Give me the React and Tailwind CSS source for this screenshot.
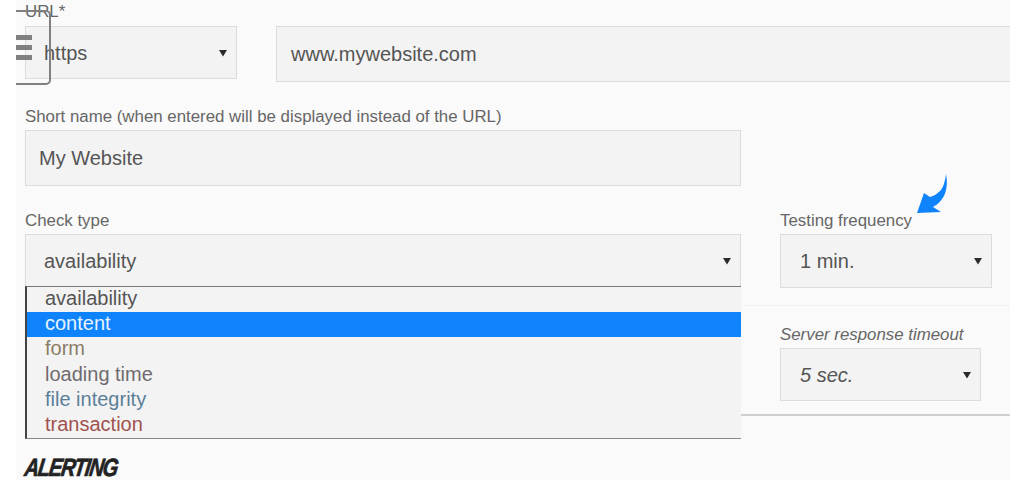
const font = "font-['Liberation_Sans',Arial,sans-serif]";
const field = "border border-[#dcdcdc] bg-[#f3f3f3] text-[#555] text-[20px] flex items-center";
const label = "text-[16.85px] leading-[18px] text-[#666]";

function Caret() {
  return (
    <svg width="8" height="8" viewBox="0 0 8 8" className="shrink-0">
      <path d="M0 1h8L4 7.5z" fill="#2b2b2b" />
    </svg>
  );
}

function Select({ value, className }) {
  return (
    <div className={`${field} justify-between pr-[9px] ${className}`}>
      <span>{value}</span>
      <Caret />
    </div>
  );
}

const options = [
  { label: "availability", color: "text-[#555]" },
  { label: "content", color: "text-[#e6f3ff] bg-[#0f83fb]" },
  { label: "form", color: "text-[#8a7d66]" },
  { label: "loading time", color: "text-[#6f6a6f]" },
  { label: "file integrity", color: "text-[#5b7f99]" },
  { label: "transaction", color: "text-[#a0524e]" },
];

export default function App() {
  return (
    <div className={`${font} relative w-[1024px] h-[480px] overflow-hidden bg-white`}>
      <div className="ml-4 mr-[14px] h-full bg-[#fafafa] pl-[9px] flex flex-col">
        {/* url row */}
        <div className={`${label} pt-[3px] h-[26px]`}>URL*</div>
        <div className="flex items-start gap-[39px]">
          <Select value="https" className="pl-[18px] w-[212px] h-[53px]" />
          <div className={`${field} flex-1 h-[56px] pl-[14px] border-r-0`}>www.mywebsite.com</div>
        </div>

        <div className={`${label} mt-[26px] h-[22px]`}>
          Short name (when entered will be displayed instead of the URL)
        </div>
        <div className={`${field} w-[716px] h-[56px] pl-[13px]`}>My Website</div>

        {/* check type + frequency */}
        <div className="flex mt-[26px]">
          <div className="relative w-[716px]">
            <div className={`${label} h-[22px]`}>Check type</div>
            <Select value="availability" className="pl-[18px] w-[716px] h-[54px]" />
            <div className="absolute top-[74px] left-0 z-10 w-[716px] h-[153px] border-l-2 border-l-[#444] border-t border-t-[#777] border-b border-b-[#888] bg-[#f3f3f3] text-[20px] leading-[25.2px]">
              {options.map((o) => (
                <div key={o.label} className={`pl-[18px] ${o.color}`}>
                  <span className="block -translate-y-[1px]">{o.label}</span>
                </div>
              ))}
            </div>
          </div>
          <div className="ml-[39px]">
            <div className={`${label} h-[22px]`}>Testing frequency</div>
            <Select value="1 min." className="pl-[19px] w-[212px] h-[54px]" />
          </div>
        </div>

        {/* timeout block */}
        <div className="ml-[716px] mt-[17px] h-[111px] border-b-2 border-b-[#cfcfcf]">
          <div className="ml-[4px] border-t border-t-[#f0f0f0] h-[21px]" />
          <div className="pl-[39px]">
            <div className={`${label} italic h-[22px]`}>Server response timeout</div>
            <Select value="5 sec." className="pl-[19px] italic w-[201px] h-[53px]" />
          </div>
        </div>

        <div className="mt-[39px] w-fit italic font-bold text-[25px] leading-[24px] text-[#222] tracking-[-1.5px] [-webkit-text-stroke:0.7px_#222] [transform:scaleX(0.8)_skewX(-10deg)] origin-left">
          ALERTING
        </div>
      </div>

      {/* floating menu button */}
      <div className="absolute left-4 top-[10px] w-[35px] h-[75px] border-t-2 border-r-[2.5px] border-b-[2.5px] border-[#808080] rounded-r-[5px] pointer-events-none">
        <div className="mt-[23px] flex flex-col gap-[5px]">
          <div className="w-[16px] h-[5px] bg-[#808080]" />
          <div className="w-[16px] h-[5px] bg-[#808080]" />
          <div className="w-[16px] h-[5px] bg-[#808080]" />
        </div>
      </div>

      {/* arrow annotation */}
      <svg className="absolute left-[915px] top-[172px]" width="36" height="46" viewBox="0 0 36 46">
        <path d="M31 2C30 10 28 16 25 19C22 22 19 24 15 25L9 21L2 41L26 40L18 35C24 32 35 23 31 2z" fill="#0f83fb" />
      </svg>
    </div>
  );
}
